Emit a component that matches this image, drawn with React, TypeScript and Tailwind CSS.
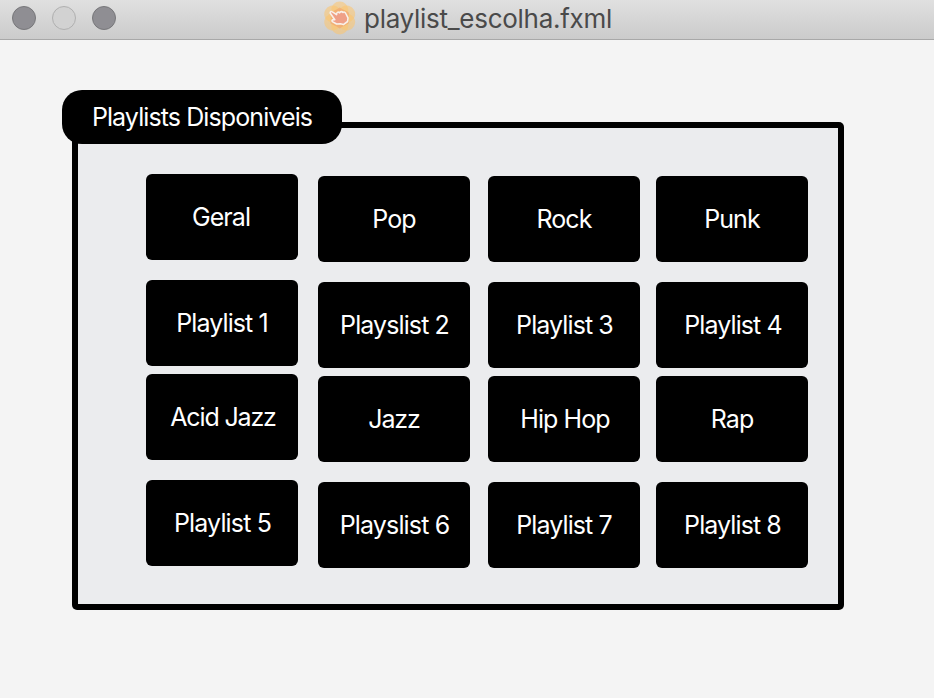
const columns = [
  {
    className: "",
    items: [
      { name: "Geral", text: "tracking-[-0.9px] -ml-0.5" },
      { name: "Playlist 1", text: "tracking-[-0.9px]" },
      { name: "Acid Jazz", text: "tracking-[-1.15px] ml-0.5" },
      { name: "Playlist 5", text: "tracking-[-0.85px] ml-px" },
    ],
  },
  {
    className: "ml-5 mt-0.5",
    items: [
      { name: "Pop", text: "tracking-[-0.9px]" },
      { name: "Playslist 2", text: "tracking-[-0.9px] ml-px" },
      { name: "Jazz", text: "tracking-[-1.1px]" },
      { name: "Playslist 6", text: "tracking-[-0.85px] ml-px" },
    ],
  },
  {
    className: "ml-[18px] mt-0.5",
    items: [
      { name: "Rock", text: "tracking-[-0.9px]" },
      { name: "Playlist 3", text: "tracking-[-0.9px] ml-px" },
      { name: "Hip Hop", text: "tracking-[-0.9px] ml-0.5" },
      { name: "Playlist 7", text: "tracking-[-0.9px]" },
    ],
  },
  {
    className: "ml-4 mt-0.5",
    items: [
      { name: "Punk", text: "tracking-[-0.9px]" },
      { name: "Playlist 4", text: "tracking-[-0.9px] ml-0.5" },
      { name: "Rap", text: "tracking-[-0.9px]" },
      { name: "Playlist 8", text: "tracking-[-0.9px] ml-px" },
    ],
  },
];

const rowGaps = ["", "mt-5", "mt-2", "mt-5"];

function FileIcon() {
  return (
    <svg viewBox="0 0 34 34" className="h-[34px] w-[34px] shrink-0">
      <g fill="#fdc56c" fillOpacity="0.55">
        {[0, 60, 120, 180, 240, 300].map((angle) => (
          <circle key={angle} cx="16.7" cy="9" r="8.5" transform={`rotate(${angle} 16.7 17)`} />
        ))}
      </g>
      <path
        d="M16.7 6.5C19.5 8.500 24 10 26 11.700C25.500 15 25.500 19 26 22.300C23 24 19.500 25.500 16.700 27.500C14 25.500 10 24 7.400 22.300C8 19 8 15 7.400 11.700C10 10 14 8.500 16.700 6.500Z"
        fill="#f09a68"
        fillOpacity="0.5"
      />
      <path
        d="M7.3 12.2C6.8 10.7 8.3 10 9.4 10.8L13.6 13.6C13.3 11.3 15.2 10.5 16.7 11.8C17.2 10.3 19.1 10.2 20 11.5C21 10.6 22.300 11.100 22.800 12.500L25 16.800L24.600 20.500L20.400 23.600L17.400 22.800L13.600 23L9.300 20.600C8.300 19.200 9.800 18.300 11.800 18.700Z"
        fill="#efa087"
        stroke="#f8f1ea"
        strokeWidth="1.6"
        strokeLinejoin="round"
      />
    </svg>
  );
}

function TitleBar() {
  return (
    <header className="flex h-10 border-b border-[#a8a8a8] bg-linear-to-b from-[#e0e0e0] to-[#cbcbcb] pt-px">
      <div className="ml-3 mt-[5px] flex gap-4">
        <span className="size-6 rounded-full border border-[#77777a] bg-[#8f8e93]" />
        <span className="size-6 rounded-full border border-[#b0b0b0] bg-[#d2d2d2]" />
        <span className="size-6 rounded-full border border-[#77777a] bg-[#8f8e93]" />
      </div>
      <div className="ml-[207px] flex h-[34px]">
        <FileIcon />
        <h1 className="ml-[7px] mt-px whitespace-nowrap text-[26px] leading-[34px] tracking-[-0.28px] text-[#4a4a4a]">
          playlist_escolha.fxml
        </h1>
      </div>
    </header>
  );
}

export default function App() {
  return (
    <div className="h-[698px] w-[934px] overflow-hidden bg-[#f4f4f4] font-['Inter','Liberation_Sans',sans-serif]">
      <TitleBar />
      <main className="relative ml-[72px] mt-[82px] h-[488px] w-[772px] rounded-[5px] bg-black p-1.5">
        <h2 className="absolute -left-[10.4px] -top-[32.4px] flex h-[54.8px] w-[280.8px] items-center justify-center whitespace-nowrap rounded-[20px] bg-black pt-px text-[25px] tracking-[-0.9px] text-white">
          Playlists Disponiveis
        </h2>
        <div className="flex h-full bg-[#ebecee] pl-[68px] pt-[46px]">
          {columns.map((column) => (
            <div key={column.items[0].name} className={column.className}>
              {column.items.map((item, row) => (
                <button
                  key={item.name}
                  className={`flex h-[86px] w-[152px] items-center justify-center rounded-[6px] bg-black pt-0.5 text-[25px] text-white ${rowGaps[row]}`}
                >
                  <span className={`whitespace-nowrap ${item.text}`}>{item.name}</span>
                </button>
              ))}
            </div>
          ))}
        </div>
      </main>
    </div>
  );
}
